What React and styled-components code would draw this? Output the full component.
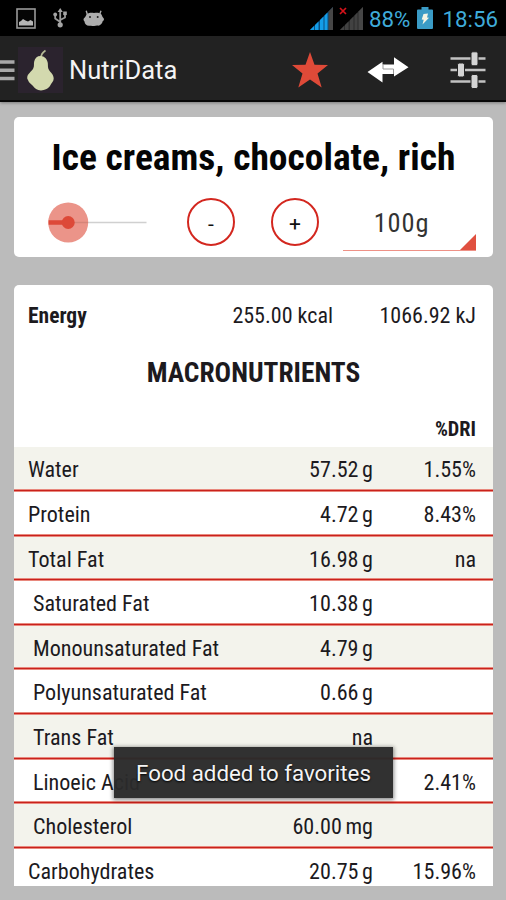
import React from 'react';
import styled, { createGlobalStyle } from 'styled-components';

const Global = createGlobalStyle`
  * { box-sizing: border-box; }
  html, body { margin: 0; padding: 0; background: #bbbbbb; overflow: hidden; }
`;

const Screen = styled.div`
  position: relative;
  width: 506px;
  height: 900px;
  display: flex;
  flex-direction: column;
  overflow: hidden;
  background: #bbbbbb;
  color: #1c1a1e;
  font-family: 'Roboto Condensed', Roboto, sans-serif;
`;

const StatusBar = styled.header`
  height: 36px;
  flex: none;
  display: flex;
  align-items: center;
  justify-content: space-between;
  padding: 0 8px 0 16px;
  background: #000;
`;

const StatusGroup = styled.div`
  display: flex;
  align-items: center;
`;

const StatusIcon = styled.svg`
  display: block;
  flex: none;
  margin-left: ${(p) => p.$gap || 0}px;
`;

const StatusText = styled.span`
  font: 22.3px/36px Roboto, sans-serif;
  margin-left: ${(p) => p.$gap}px;
  padding-top: 1px;
  color: #3fabd9;
`;

const ActionBar = styled.nav`
  height: 66px;
  flex: none;
  display: flex;
  align-items: center;
  background: #222222;
  border-bottom: 2px solid #080808;
  box-shadow: 0 1px 3px rgba(0, 0, 0, 0.35);
`;

const AppName = styled.h1`
  flex: 1;
  margin: 0 0 0 6px;
  padding-top: 3px;
  font: 25.5px/60px Roboto, sans-serif;
  color: #f4f4f4;
`;

const BarIcon = styled.svg`
  display: block;
  flex: none;
  margin-top: ${(p) => p.$drop || 0}px;
  margin-right: ${(p) => p.$after || 0}px;
`;

const Content = styled.main`
  flex: 1;
  min-height: 0;
  display: flex;
  flex-direction: column;
  gap: 28px;
  padding: 15px 13px 14px 14px;
`;

const Card = styled.section`
  background: #fff;
  border-radius: ${(p) => (p.$clipped ? '5px 5px 0 0' : '5px')};
  overflow: hidden;
  height: ${(p) => p.$height}px;
  flex: none;
`;

const FoodTitle = styled.h2`
  margin: 0;
  padding-top: 16px;
  text-align: center;
  font-size: 37.5px;
  line-height: 49px;
  font-weight: 700;
  color: #050505;
  white-space: nowrap;
`;

const Controls = styled.div`
  display: flex;
  align-items: center;
  height: 80px;
  padding: 0 17px 0 34px;
`;

const SliderDrawing = styled.svg`
  display: block;
  flex: none;
  margin-right: 40px;
`;

const RoundButton = styled.button`
  width: 48px;
  height: 48px;
  flex: none;
  margin: 0 36px 0 0;
  padding: 4px 0 0;
  border: 2px solid #d3271f;
  border-radius: 50%;
  background: #fff;
  color: #111;
  font: 400 21px/40px Roboto, sans-serif;
`;

const Spinner = styled.div`
  display: flex;
  align-items: flex-end;
  width: 133px;
  height: 58px;
  margin: 0 0 0 -12px;
  border-bottom: 1px solid #ee9186;
`;

const SpinnerValue = styled.span`
  flex: 1;
  text-align: center;
  font: 26.4px/54px 'Roboto Condensed', Roboto, sans-serif;
  letter-spacing: 0.9px;
  color: #333;
`;

const EnergyRow = styled.div`
  display: grid;
  grid-template-columns: 1fr 170px 143px;
  height: 62px;
  padding: 0 17px 0 14px;
  line-height: 62px;
  font-size: 22px;
  text-align: right;
`;

const EnergyLabel = styled.strong`
  text-align: left;
  font-size: 21.5px;
`;

const SectionTitle = styled.h3`
  margin: 0;
  height: 52px;
  line-height: 53px;
  font-size: 27.4px;
  font-weight: 700;
  text-align: center;
`;

const DriHeading = styled.div`
  height: 48.4px;
  padding: 11px 17px 0 0;
  line-height: 38px;
  text-align: right;
  font-size: 20.3px;
  font-weight: 700;
`;

const Row = styled.div`
  display: grid;
  grid-template-columns: 1fr 120px 103px;
  height: 44.6px;
  padding: 0 17px 0 ${(p) => (p.$sub ? 19 : 14)}px;
  background: linear-gradient(#e8897e 0 1px, #c9211c 1px 2px, #e8897e 2px 3px) bottom / 100% 3px no-repeat
    ${(p) => (p.$shaded ? '#f3f3ec' : '#fff')};
  font-size: 22.1px;
  line-height: 44px;
  text-align: right;
  white-space: nowrap;
`;

const Name = styled.span`
  text-align: left;
`;

const Amount = styled.span`
  word-spacing: -1.5px;
`;

const Toast = styled.div`
  position: absolute;
  left: 114px;
  top: 747px;
  width: 279px;
  height: 51px;
  background: rgba(42, 42, 42, 0.97);
  box-shadow: 0 1px 4px 1px rgba(0, 0, 0, 0.45);
  color: #f4f4f4;
  text-align: center;
  font: 22.3px/53px Roboto, sans-serif;
  text-shadow: 0 1px 2px #000;
  white-space: nowrap;
`;

const nutrients = [
  ['Water', '57.52 g', '1.55%'],
  ['Protein', '4.72 g', '8.43%'],
  ['Total Fat', '16.98 g', 'na'],
  ['Saturated Fat', '10.38 g', '', true],
  ['Monounsaturated Fat', '4.79 g', '', true],
  ['Polyunsaturated Fat', '0.66 g', '', true],
  ['Trans Fat', 'na', '', true],
  ['Linoeic Acid', '', '2.41%', true],
  ['Cholesterol', '60.00 mg', '', true],
  ['Carbohydrates', '20.75 g', '15.96%'],
];

const PictureIcon = () => (
  <StatusIcon width="20" height="21" viewBox="0 0 20 21">
    <rect x="1" y="1" width="18" height="19" fill="#050505" stroke="#999" strokeWidth="1.6" />
    <path d="M3 17.5v-3.500l2-1 2-2 2.500 1.500L12 13.500l2.500-1.500L17 13.500v4z" fill="#b5b5b5" />
  </StatusIcon>
);

const UsbIcon = () => (
  <StatusIcon $gap={17} width="15" height="20" viewBox="0 0 15 20">
    <g fill="none" stroke="#9a9a9a" strokeWidth="1.8">
      <path d="M7.2 3v14M7.2 14L2.2 10.5V6M7.2 12L12 9.500V5" />
    </g>
    <g fill="#a5a5a5">
      <path d="M7.200 0l2.600 4H4.600z" />
      <circle cx="7.200" cy="16.800" r="2.600" />
      <circle cx="2.200" cy="6.500" r="1.900" />
      <rect x="10.200" y="3.500" width="3.600" height="3.600" />
    </g>
  </StatusIcon>
);

const DroidIcon = () => (
  <StatusIcon $gap={15} width="22" height="17" viewBox="0 0 22 17">
    <path d="M4.500 5L3.200.8M16.500 5L18 .8" stroke="#aaa" strokeWidth="1.400" />
    <path
      d="M4 4C6 2.500 9 2.700 11 3c2.500-.4 5-.5 7 1 1 1 1.200 2.800 2 3.500 1.500 1 1.200 3-.2 3.600-.8 3-2.800 4.800-5 4.500-1.500-.3-2.500.4-4 .3-1.800 0-2.600-.4-4.200-.2C3.700 16 1.700 14 1.500 11.500.2 10.500.2 8.500 1.500 7.800 2.700 7 2.800 5 4 4z"
      fill="#adadad"
    />
    <circle cx="7" cy="7" r="1" fill="#222" />
    <circle cx="14.700" cy="7" r="1" fill="#222" />
  </StatusIcon>
);

const SignalIcon = ({ active, gap }) => (
  <StatusIcon $gap={gap} width="24" height="23" viewBox="0 0 24 23">
    <path d="M1 23L24 0V23z" fill={active ? '#0a4f80' : '#2b2b2b'} />
    <path
      d="M1 23l4-4v4zM6 18l3.500-3.500V23H6zM11 13l3.500-3.500V23H11zM15.500 8.500L18.500 5.500V23h-3z"
      fill={active ? '#149de8' : '#424242'}
    />
    <path d="M19.500 4.500L24 0V23h-4.500z" fill="#464646" />
    {!active && <path d="M1 1l6 6M7 1L1 7" stroke="#d5121a" strokeWidth="1.700" />}
  </StatusIcon>
);

const BatteryIcon = () => (
  <StatusIcon $gap={7} width="16" height="22" viewBox="0 0 16 22">
    <path d="M4.500 0h7v2.500H15q1 0 1 1V21q0 1-1 1H1q-1 0-1-1V3.500q0-1 1-1h3.500z" fill="#3a9bc6" />
    <path d="M6.500 7l4.500-.5-1 4 2 .2-6.500 6.800 1.200-4.700-2-.3z" fill="#f4f4e4" />
  </StatusIcon>
);

const MenuIcon = () => (
  <BarIcon $after={3} $drop={4} width="15" height="24" viewBox="0 0 15 24">
    <path d="M0 4h14.500M0 12.300h14.500M0 20.500h14.500" stroke="#a8a8a8" strokeWidth="3.400" />
  </BarIcon>
);

const PearLogo = () => (
  <BarIcon $drop={3} width="45" height="46" viewBox="0 0 45 46">
    <rect width="45" height="46" fill="#2b232e" />
    <path d="M23 11c0-3 .5-5 4.500-7.500" stroke="#b4b995" strokeWidth="1.700" fill="none" />
    <path
      d="M22.500 9c4 0 6.700 3.200 7.300 7 .3 2.500-.3 4.500 1.200 7 1.700 2.700 4.700 4.700 4.700 8.500 0 3-2.200 4.200-3.200 6.500-1.500 3.500-6 5-9.500 5.500-4 0-6.500-2.300-8.200-4.700-1-1.500-4-3-4.400-4.800-.2-1.300-1.200-1.500-1.200-3 0-4.500 4.300-6 6-9.500 1.300-2.500.4-4.500 1-7C17 11 19 9 22.500 9z"
      fill="#d3d9ae"
    />
  </BarIcon>
);

const StarIcon = () => (
  <BarIcon $after={39} $drop={4} width="36" height="36" viewBox="0 0 36 36">
    <path d="M18 0l4.500 12.700L36 13.100 25.500 21.500 29.700 35.500 18 27.600 6.300 35.500 10.500 21.500 0 13.100l13.500-.4z" fill="#df4a38" />
  </BarIcon>
);

const SwapIcon = () => (
  <BarIcon $after={41} $drop={3} width="42" height="28" viewBox="0 0 42 28">
    <path d="M.5 16L15.500 5.800V8.500H27V1.200L41.500 11.200 27 20.500V18H15.500V26.500z" fill="#fff" />
    <path d="M16 8.500V13H26.500V18" fill="none" stroke="#999" strokeWidth="1" />
  </BarIcon>
);

const TuneIcon = () => (
  <BarIcon $after={20} $drop={3} width="36" height="38" viewBox="0 0 36 38">
    <path d="M.5 7.500h35M.5 19h35M.5 30.500h35" stroke="#c2c2c2" strokeWidth="2.500" />
    <g fill="#d4d4d4" stroke="#222" strokeWidth="1">
      <rect x="21" y=".8" width="7" height="14" rx="1.800" />
      <rect x="7.500" y="12" width="7" height="14" rx="1.800" />
      <rect x="21" y="23.500" width="7" height="14" rx="1.800" />
    </g>
  </BarIcon>
);

const AmountSlider = () => (
  <SliderDrawing width="99" height="42" viewBox="0 0 99 42">
    <path d="M40 21.500h58.500" stroke="#d0d0d0" strokeWidth="1.500" />
    <circle cx="20.200" cy="21.500" r="20" fill="#eb9489" />
    <path d="M20 21.500h20" stroke="#d58479" strokeWidth="1.500" />
    <path d="M.6 21.500H20" stroke="#dd4938" strokeWidth="4.600" />
    <circle cx="20.200" cy="21.500" r="6.500" fill="#dd4938" />
  </SliderDrawing>
);

const SpinnerCorner = () => (
  <StatusIcon width="16" height="16" viewBox="0 0 16 16">
    <path d="M16 0V16H0z" fill="#e05040" />
  </StatusIcon>
);

export default function App() {
  return (
    <Screen>
      <Global />
      <StatusBar>
        <StatusGroup>
          <PictureIcon />
          <UsbIcon />
          <DroidIcon />
        </StatusGroup>
        <StatusGroup>
          <SignalIcon active />
          <SignalIcon gap={6} />
          <StatusText $gap={6.5}>88%</StatusText>
          <BatteryIcon />
          <StatusText $gap={9}>18:56</StatusText>
        </StatusGroup>
      </StatusBar>
      <ActionBar>
        <MenuIcon />
        <PearLogo />
        <AppName>NutriData</AppName>
        <StarIcon />
        <SwapIcon />
        <TuneIcon />
      </ActionBar>
      <Content>
        <Card $height={140}>
          <FoodTitle>Ice creams, chocolate, rich</FoodTitle>
          <Controls>
            <AmountSlider />
            <RoundButton>-</RoundButton>
            <RoundButton>+</RoundButton>
            <Spinner>
              <SpinnerValue>100g</SpinnerValue>
              <SpinnerCorner />
            </Spinner>
          </Controls>
        </Card>
        <Card $height={601} $clipped>
          <EnergyRow>
            <EnergyLabel>Energy</EnergyLabel>
            <span>255.00 kcal</span>
            <span>1066.92 kJ</span>
          </EnergyRow>
          <SectionTitle>MACRONUTRIENTS</SectionTitle>
          <DriHeading>%DRI</DriHeading>
          {nutrients.map(([name, amount, dri, sub], i) => (
            <Row key={name} $sub={sub} $shaded={i % 2 === 0}>
              <Name>{name}</Name>
              <Amount>{amount}</Amount>
              <span>{dri}</span>
            </Row>
          ))}
        </Card>
      </Content>
      <Toast>Food added to favorites</Toast>
    </Screen>
  );
}
